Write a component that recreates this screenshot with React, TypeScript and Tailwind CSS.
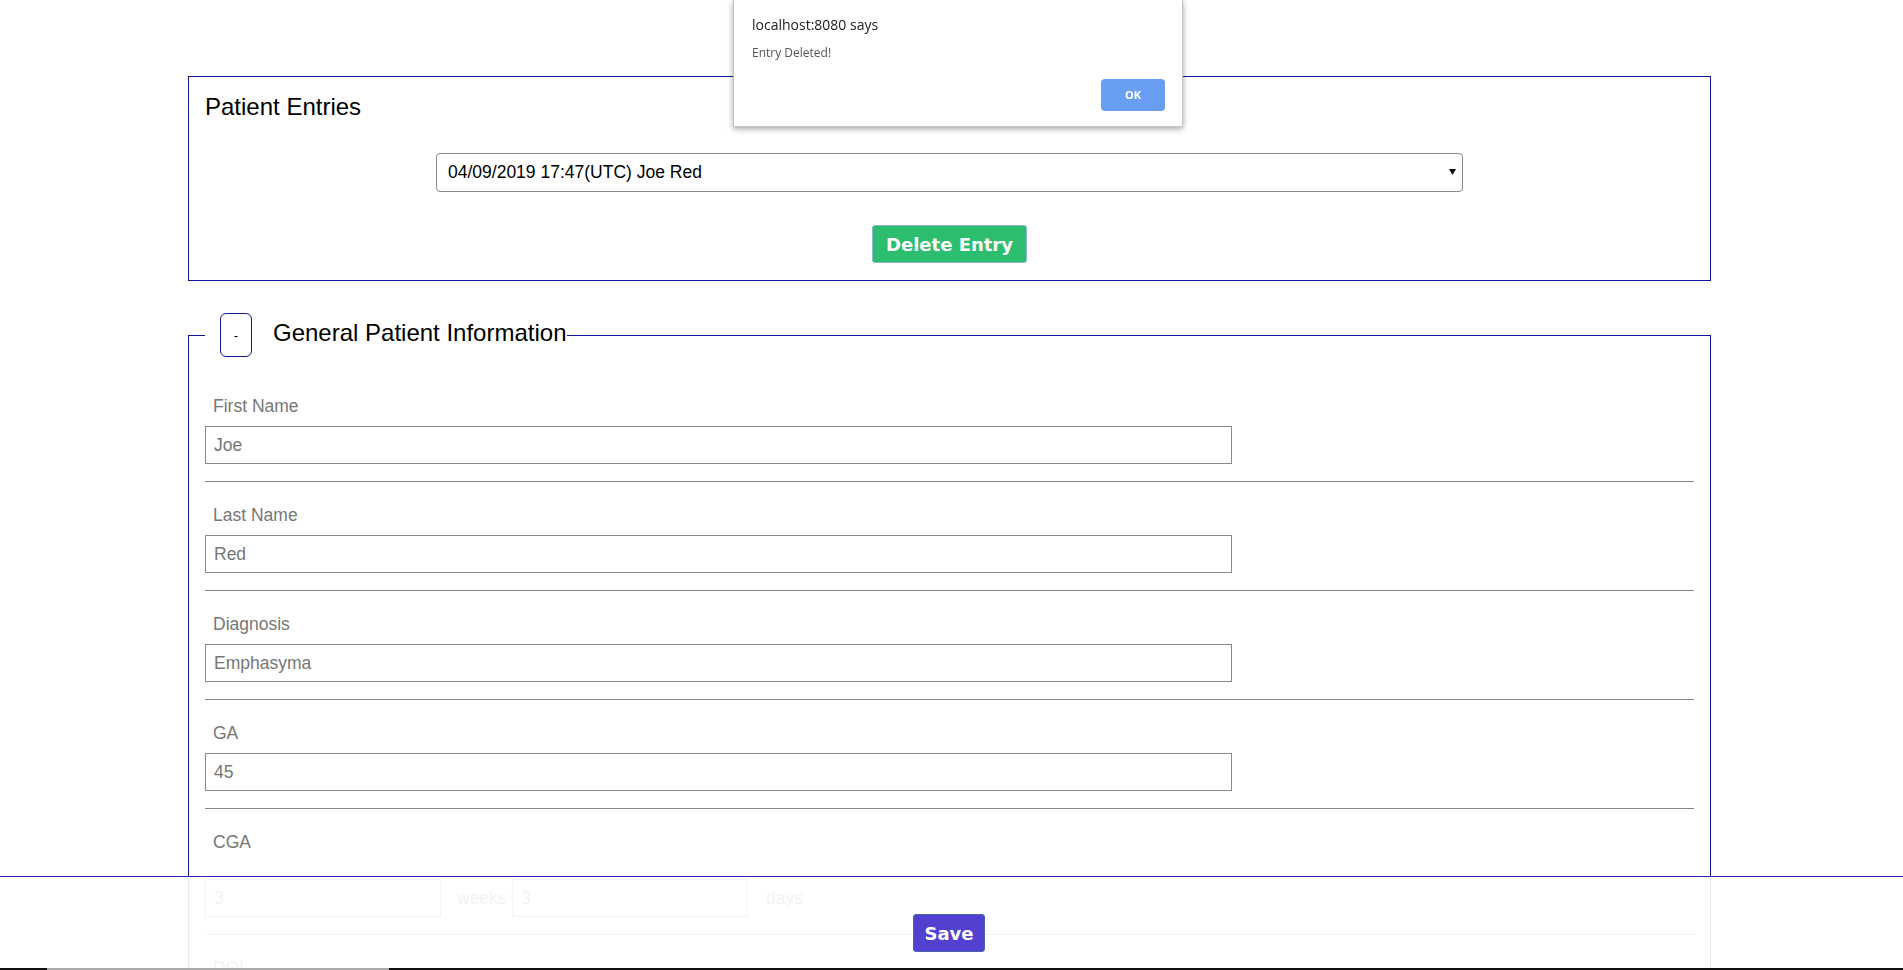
import React from "react";

const rows = [
  { label: "First Name", value: "Joe" },
  { label: "Last Name", value: "Red" },
  { label: "Diagnosis", value: "Emphasyma" },
  { label: "GA", value: "45" },
];

const Field = ({ label, value }: { label: string; value: string }) => (
  <div className="pt-[24px] pb-[17px] border-b border-[#858585]">
    <div className="pl-2 text-[17.5px] leading-[18px] text-[#777]">{label}</div>
    <input
      defaultValue={value}
      className="mt-[11px] block w-[1027px] h-[38px] border border-[#8a8a8a] px-2 text-[17.5px] text-[#777] outline-none"
    />
  </div>
);

const App = () => {
  return (
    <div className="relative min-h-screen bg-white font-['Liberation_Sans',Arial,sans-serif] text-black">
      <div className="pt-[76px] pb-[160px]">
        {/* patient entries */}
        <section className="ml-[188px] w-[1523px] border border-[#14149a] px-4 pt-4 pb-[17px]">
          <h2 className="text-[24px] leading-[28px]">Patient Entries</h2>
          <div className="mt-[32px] flex justify-center">
            <div className="relative">
              <select className="block w-[1027px] h-[39px] appearance-none rounded-[4px] border border-[#8a8a8a] bg-white pl-[11px] text-[17.5px] text-black outline-none">
                <option>04/09/2019 17:47(UTC) Joe Red</option>
                <option>04/08/2019 09:12(UTC) Jane Blue</option>
              </select>
              <svg className="pointer-events-none absolute right-[7px] top-[16px]" width="7" height="6" viewBox="0 0 7 6">
                <path d="M0 0h7L3.5 6z" fill="#111" />
              </svg>
            </div>
          </div>
          <div className="mt-[33px] flex justify-center">
            <button className="w-[155px] h-[38px] rounded-[3px] border border-[#8bb4d6] bg-[#2dbd6e] text-[18px] font-bold text-white font-['DejaVu_Sans',sans-serif]">
              Delete Entry
            </button>
          </div>
        </section>

        {/* general info */}
        <fieldset className="ml-[188px] mt-[32px] w-[1523px] border border-[#14149a] px-4 pt-4 pb-6">
          <legend className="pl-[15px]">
            <div className="flex items-center">
              <button className="w-[32px] h-[44px] rounded-[6px] border border-[#14149a] bg-white text-[13px] leading-none text-black">
                -
              </button>
              <span className="ml-[21px] mb-[5px] text-[24px] leading-[28px]">General Patient Information</span>
            </div>
          </legend>

          {rows.map((r) => (
            <Field key={r.label} label={r.label} value={r.value} />
          ))}

          <div className="pt-[24px] pb-[17px] border-b border-[#858585]">
            <div className="pl-2 text-[17.5px] leading-[18px] text-[#777]">CGA</div>
            <div className="mt-[28px] flex items-center text-[17.5px] text-[#777]">
              <input defaultValue="3" className="w-[236px] h-[38px] border border-[#8a8a8a] px-2 outline-none" />
              <span className="w-[71px] pl-[16px]">weeks</span>
              <input defaultValue="3" className="w-[236px] h-[38px] border border-[#8a8a8a] px-2 outline-none" />
              <span className="pl-[18px]">days</span>
            </div>
          </div>

          <div className="pt-[24px] pb-[17px] border-b border-[#858585]">
            <div className="pl-2 text-[17.5px] leading-[18px] text-[#777]">DOL</div>
            <input defaultValue="24" className="mt-[11px] block w-[1027px] h-[38px] border border-[#8a8a8a] px-2 text-[17.5px] text-[#777] outline-none" />
          </div>
          <Field label="Weight" value="3.2" />
        </fieldset>
      </div>

      {/* sticky save bar */}
      <div className="fixed bottom-0 left-0 right-0 h-[94px] border-t border-[#2a22b0] bg-white/90 flex justify-center pt-[37px] pr-[5px]">
        <button className="w-[72px] h-[38px] rounded-[3px] border border-[#4a62a8] bg-[#5241d1] text-[18px] font-bold text-white font-['DejaVu_Sans',sans-serif]">
          Save
        </button>
      </div>
      <div className="fixed bottom-0 left-0 right-0 h-[2px] bg-[#111]">
        <div className="absolute left-[47px] top-0 h-[2px] w-[342px] bg-[#aaa]" />
      </div>

      {/* alert dialog */}
      <div className="fixed top-0 left-[733px] w-[450px] h-[127px] bg-white border border-t-0 border-[#c4c4c4] shadow-[0_2px_6px_rgba(0,0,0,0.35)] pl-[18px] pt-[15px] font-['Open_Sans',sans-serif]">
        <div className="text-[14px] leading-[20px] text-[#222]">localhost:8080 says</div>
        <div className="mt-[10px] text-[12px] leading-[16px] text-[#555]">Entry Deleted!</div>
        <div className="mt-[18px] flex justify-end pr-[17px]">
          <button className="w-[64px] h-[32px] rounded-[4px] bg-[#6a9ef5] text-[11px] font-bold text-white">OK</button>
        </div>
      </div>
    </div>
  );
};

export default App;
